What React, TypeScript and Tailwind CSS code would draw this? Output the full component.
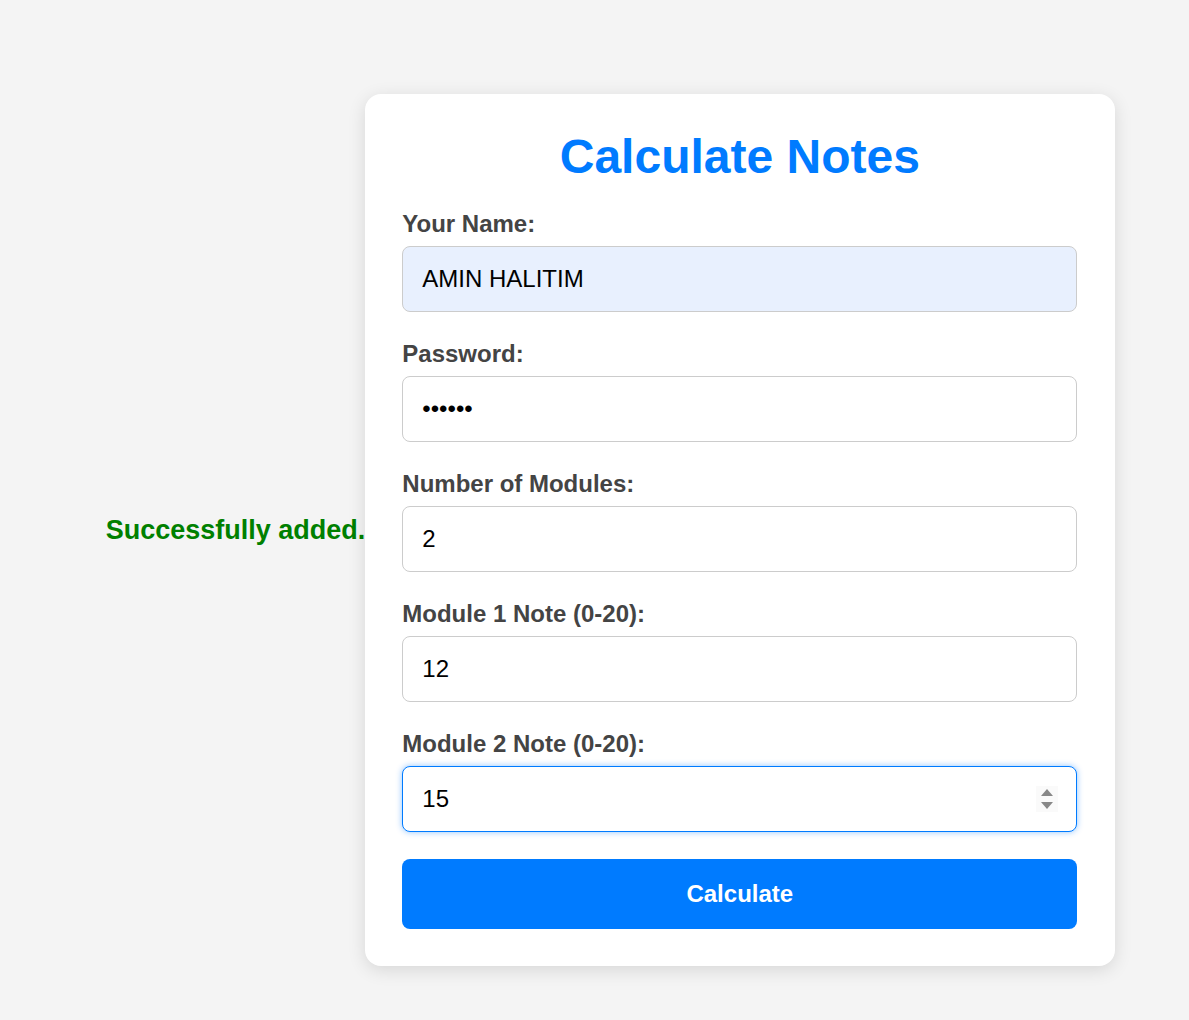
import React from 'react';

const font = { fontFamily: '"Liberation Sans", Arial, sans-serif' };

function Field({
  label,
  value,
  type = 'text',
  autofill = false,
  focused = false,
}: {
  label: string;
  value: string;
  type?: string;
  autofill?: boolean;
  focused?: boolean;
}) {
  const base =
    'w-full h-[66px] rounded-[8px] border px-[19px] text-[24px] text-black outline-none';
  const tone = focused
    ? 'border-[#007bff] bg-white shadow-[0_0_6px_rgba(0,123,255,0.45)]'
    : autofill
      ? 'border-[#ccc] bg-[#e8f0fe]'
      : 'border-[#ccc] bg-white';

  return (
    <div className="flex flex-col">
      <label className="mb-[9px] text-[24px] leading-[27px] font-bold text-[#444]">{label}</label>
      <div className="relative">
        <input type={type} defaultValue={value} readOnly className={`${base} ${tone}`} style={font} />
        {focused && (
          // faux spin buttons shown by the browser on the focused number field
          <div className="absolute right-[19px] top-[20px] flex h-[26px] w-[22px] flex-col items-center justify-center gap-[6px] bg-[#fafafa]">
            <div className="h-0 w-0 border-x-[6px] border-b-[7px] border-x-transparent border-b-[#888]" />
            <div className="h-0 w-0 border-x-[6px] border-t-[7px] border-x-transparent border-t-[#888]" />
          </div>
        )}
      </div>
    </div>
  );
}

export default function App() {
  return (
    <div className="flex h-[1020px] items-center justify-center bg-[#f4f4f4] pt-[40px]" style={font}>
      <p className="ml-[32px] text-[27px] font-bold text-[#008000]">Successfully added.</p>

      <div className="w-[750px] rounded-[16px] bg-white pl-[37px] pr-[38px] pt-[33px] pb-[37px] shadow-[0_4px_18px_rgba(0,0,0,0.12)]">
        <h1 className="mb-[23px] text-center text-[48px] leading-[60px] font-bold text-[#007bff]">Calculate Notes</h1>

        <form className="flex flex-col gap-[28px]" onSubmit={(e) => e.preventDefault()}>
          <Field label="Your Name:" value="AMIN HALITIM" autofill />
          <Field label="Password:" value="123456" type="password" />
          <Field label="Number of Modules:" value="2" />
          <Field label="Module 1 Note (0-20):" value="12" />
          <Field label="Module 2 Note (0-20):" value="15" focused />
          <button
            type="submit"
            className="-mt-[1px] h-[70px] w-full rounded-[8px] bg-[#007bff] text-[24px] font-bold text-white"
          >
            Calculate
          </button>
        </form>
      </div>
    </div>
  );
}
